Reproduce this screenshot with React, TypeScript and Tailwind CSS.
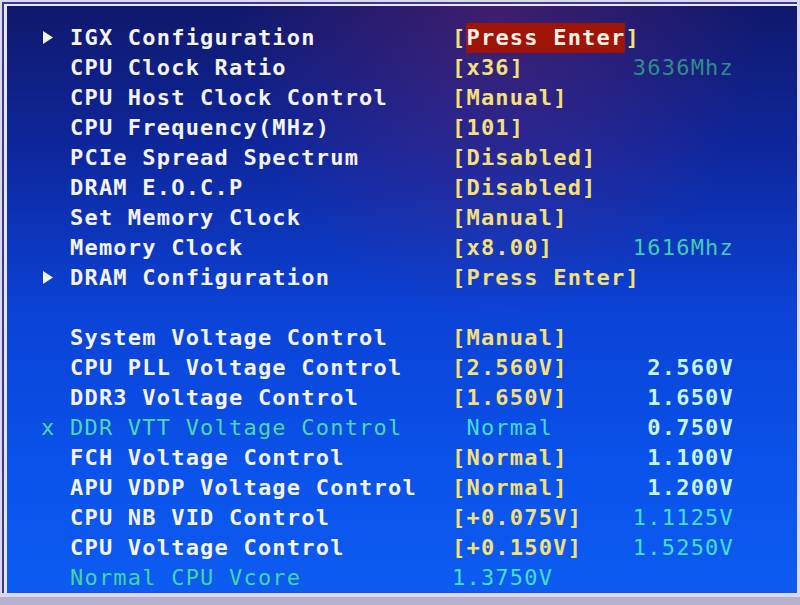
import React from "react";

type Row = {
  mark?: "tri" | "x";
  label?: string;
  labelCls?: string;
  value?: React.ReactNode;
  info?: string;
  infoCls?: string;
};

const Y = "text-[#f4e07a] font-bold";
const W = "text-[#f4f4ff] font-bold";
const VOLT = "text-[#c6f6ff] font-bold";
const CY = "text-[#3fe0d6]";

const rows: Row[] = [
  {
    mark: "tri",
    label: "IGX Configuration",
    value: (
      <span className={Y}>
        [<span className="inline-block h-[30px] bg-[#a01408] text-[#fff3e6]">Press Enter</span>]
      </span>
    ),
  },
  { label: "CPU Clock Ratio", value: <span className={Y}>[x36]</span>, info: "3636Mhz", infoCls: "text-[#2d8f84]" },
  { label: "CPU Host Clock Control", value: <span className={Y}>[Manual]</span> },
  { label: "CPU Frequency(MHz)", value: <span className={Y}>[101]</span> },
  { label: "PCIe Spread Spectrum", value: <span className={Y}>[Disabled]</span> },
  { label: "DRAM E.O.C.P", value: <span className={Y}>[Disabled]</span> },
  { label: "Set Memory Clock", value: <span className={Y}>[Manual]</span> },
  { label: "Memory Clock", value: <span className={Y}>[x8.00]</span>, info: "1616Mhz", infoCls: "text-[#3cceb0]" },
  { mark: "tri", label: "DRAM Configuration", value: <span className={Y}>[Press Enter]</span> },
  {},
  { label: "System Voltage Control", value: <span className={Y}>[Manual]</span> },
  { label: "CPU PLL Voltage Control", value: <span className={Y}>[2.560V]</span>, info: "2.560V", infoCls: VOLT },
  { label: "DDR3 Voltage Control", value: <span className={Y}>[1.650V]</span>, info: "1.650V", infoCls: VOLT },
  {
    mark: "x",
    label: "DDR VTT Voltage Control",
    labelCls: "text-[#4ad8b4]",
    value: <span className="text-[#40dce6] whitespace-pre"> Normal</span>,
    info: "0.750V",
    infoCls: VOLT,
  },
  { label: "FCH Voltage Control", value: <span className={Y}>[Normal]</span>, info: "1.100V", infoCls: VOLT },
  { label: "APU VDDP Voltage Control", value: <span className={Y}>[Normal]</span>, info: "1.200V", infoCls: VOLT },
  { label: "CPU NB VID Control", value: <span className={Y}>[+0.075V]</span>, info: "1.1125V", infoCls: CY },
  { label: "CPU Voltage Control", value: <span className={Y}>[+0.150V]</span>, info: "1.5250V", infoCls: CY },
  {
    label: "Normal CPU Vcore",
    labelCls: "text-[#3fd6a8]",
    value: <span className={CY}>1.3750V</span>,
  },
];

function Tri() {
  return (
    <svg width="12" height="15" viewBox="0 0 12 15" className="ml-[2px] mt-[7px]">
      <polygon points="1,1 11,7.5 1,14" fill="#f4f2ea" />
    </svg>
  );
}

export default function App() {
  return (
    <div className="w-[800px] h-[605px] bg-[#b4b0cc] pb-[8px] font-['DejaVu_Sans_Mono',monospace] text-[22px] leading-[30px] tracking-[1.21px]">
      <div className="h-full border-t-2 border-l-2 border-r-[3px] border-b-4 border-[#dcd8f4]">
        <div className="h-full border-t-2 border-l-2 border-[#3a3890]">
          <div className="h-full overflow-hidden border-t-2 border-l-[3px] border-[#e8e4fc] bg-[radial-gradient(ellipse_at_62%_0%,rgba(150,40,110,0.35),transparent_38%),linear-gradient(180deg,#10186c_0%,#0e279e_25%,#0b42d6_52%,#0a52ea_78%,#0d5cf2_100%)] pt-[17px] pl-[33px]">
            <div className="grid grid-cols-[30px_382px_179px_103px]">
              {rows.map((r, i) => (
                <React.Fragment key={i}>
                  <div className="h-[30px]">
                    {r.mark === "tri" && <Tri />}
                    {r.mark === "x" && <span className="text-[#4ad8b4] pl-[1px]">x</span>}
                  </div>
                  <div className={`h-[30px] whitespace-pre ${r.labelCls ?? W}`}>{r.label ?? ""}</div>
                  <div className="h-[30px] whitespace-pre">{r.value ?? ""}</div>
                  <div className={`h-[30px] whitespace-pre text-right ${r.infoCls ?? ""}`}>{r.info ?? ""}</div>
                </React.Fragment>
              ))}
            </div>
          </div>
        </div>
      </div>
    </div>
  );
}
